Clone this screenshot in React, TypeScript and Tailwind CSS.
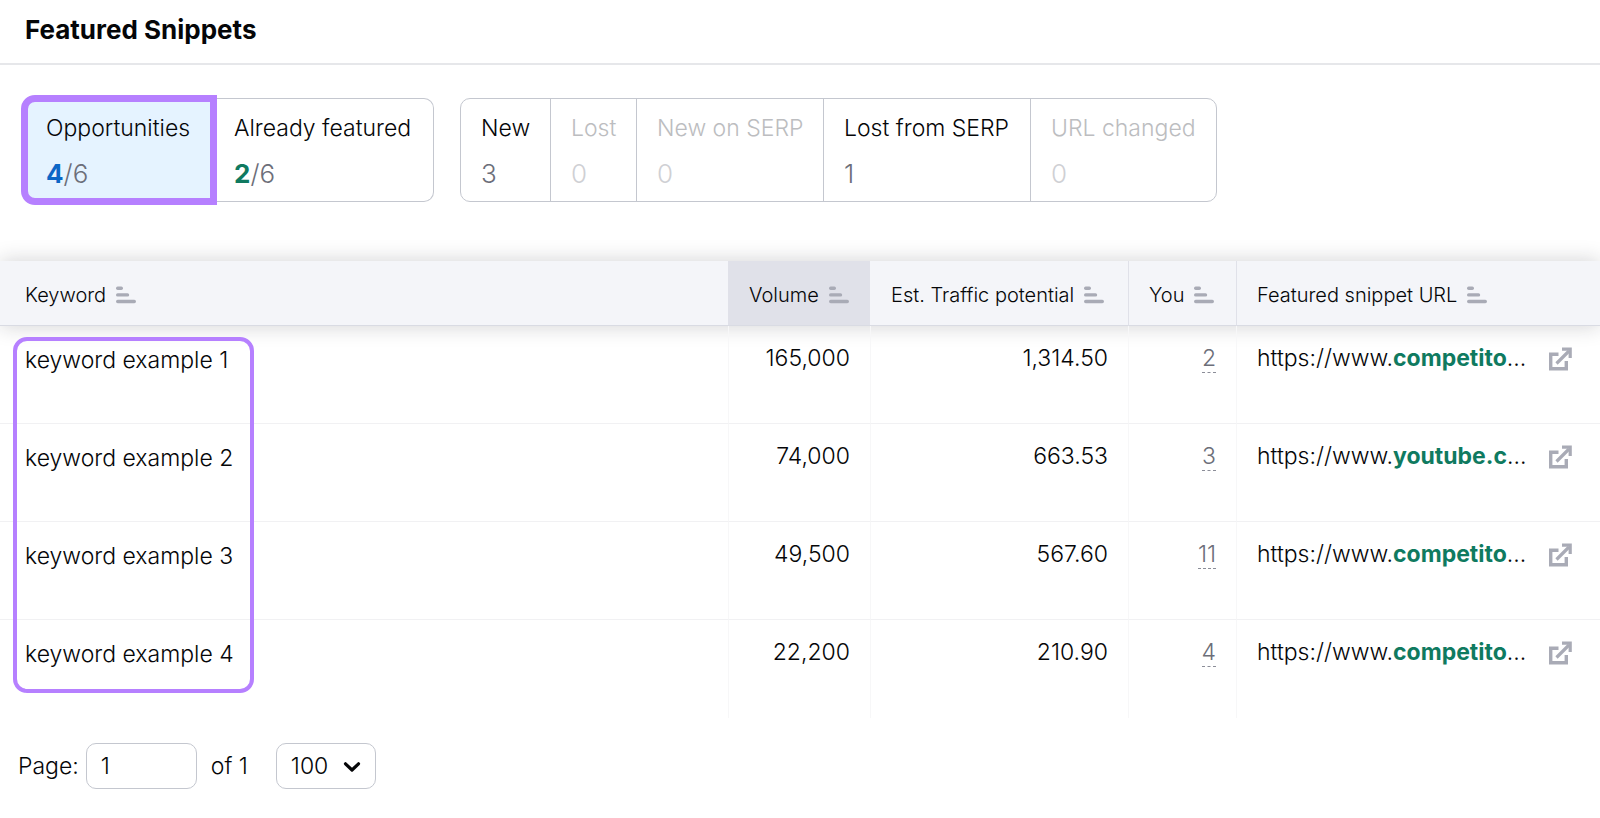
type Filter = {
  label: string;
  value: number;
  width: string;
};

type Row = {
  keyword: string;
  volume: string;
  traffic: string;
  position: number;
  domain: string;
};

const changeFilters: Filter[] = [
  { label: "New", value: 3, width: "w-[89px]" },
  { label: "Lost", value: 0, width: "w-[86px]" },
  { label: "New on SERP", value: 0, width: "w-[187px]" },
  { label: "Lost from SERP", value: 1, width: "w-[207px]" },
  { label: "URL changed", value: 0, width: "w-[186px]" },
];

const columns = [
  { label: "Keyword", className: "pl-[25px]" },
  { label: "Volume", className: "bg-[#e0e1e9] pl-[21px]" },
  { label: "Est. Traffic potential", className: "pl-[21px]" },
  { label: "You", className: "border-l border-[#e0e1e9] pl-5" },
  { label: "Featured snippet URL", className: "border-l border-[#e0e1e9] pl-5" },
];

const rows: Row[] = [
  { keyword: "keyword example 1", volume: "165,000", traffic: "1,314.50", position: 2, domain: "competito" },
  { keyword: "keyword example 2", volume: "74,000", traffic: "663.53", position: 3, domain: "youtube.c" },
  { keyword: "keyword example 3", volume: "49,500", traffic: "567.60", position: 11, domain: "competito" },
  { keyword: "keyword example 4", volume: "22,200", traffic: "210.90", position: 4, domain: "competito" },
];

function SortIcon() {
  return (
    <svg width="20" height="18" viewBox="0 0 20 18" fill="#a9abb6" aria-hidden="true">
      <rect x="0" y="0.5" width="7" height="3.4" rx="1.7" />
      <rect x="0" y="7.2" width="13.2" height="3.4" rx="1.7" />
      <rect x="0" y="13.8" width="20" height="3.4" rx="1.7" />
    </svg>
  );
}

function ExternalIcon() {
  return (
    <svg width="24" height="25" viewBox="0 0 24 25" fill="none" stroke="#a9abb6" aria-hidden="true">
      <path d="M10.5 8.2H2.7V22.8H18.3V15" strokeWidth="3.4" />
      <path d="M8.5 17.5L21 5" strokeWidth="3.2" />
      <path d="M14 3.2H22.2V12" strokeWidth="3.2" />
    </svg>
  );
}

function ChangeFilter({ label, value, width }: Filter) {
  const disabled = value === 0;

  return (
    <button
      type="button"
      disabled={disabled}
      className={`${width} flex flex-col gap-4 pt-[15px] pl-5 text-left not-first:border-l not-first:border-[#c4c7cf]`}
    >
      <span className={`text-[23px] leading-7 ${disabled ? "text-[#bcbdc0]" : "text-[#050608]"}`}>{label}</span>
      <span className={`text-[26px] leading-8 ${disabled ? "text-[#cfd0d4]" : "text-[#6c6e79]"}`}>{value}</span>
    </button>
  );
}

export default function App() {
  return (
    <main className="min-h-screen bg-white font-['Inter',sans-serif] font-light text-[#050608]">
      <header className="border-b-2 border-[#e6e7ea] px-[25px] pt-3 pb-4">
        <h1 className="text-[26px] leading-[35px] font-bold">Featured Snippets</h1>
      </header>

      <section className="flex items-center pt-[30px] pl-[21px] whitespace-nowrap">
        <button
          type="button"
          className="flex h-[110px] w-[196px] flex-col gap-4 rounded-l-[14px] border-[7px] border-[#b680ff] bg-[#e5f3ff] pt-3 pl-[18px] text-left"
        >
          <span className="text-[23px] leading-7">Opportunities</span>
          <span className="text-[26px] leading-8 text-[#6c6e79]">
            <b className="font-bold text-[#0b66c6]">4</b>/6
          </span>
        </button>
        <button
          type="button"
          className="flex h-26 w-[217px] flex-col gap-4 rounded-r-[10px] border border-l-0 border-[#c4c7cf] pt-[15px] pl-[17px] text-left"
        >
          <span className="text-[23px] leading-7">Already featured</span>
          <span className="text-[26px] leading-8 text-[#6c6e79]">
            <b className="font-bold text-[#0f7a60]">2</b>/6
          </span>
        </button>

        <div className="ml-[26px] flex h-26 rounded-[10px] border border-[#c4c7cf]">
          {changeFilters.map((filter) => (
            <ChangeFilter key={filter.label} {...filter} />
          ))}
        </div>
      </section>

      <section className="relative mt-14">
        <table className="w-full table-fixed border-separate border-spacing-0">
          <colgroup>
            <col />
            <col className="w-[142px]" />
            <col className="w-[258px]" />
            <col className="w-[108px]" />
            <col className="w-[364px]" />
          </colgroup>
          <thead className="bg-[#f4f5f9] shadow-[0_0_20px_rgba(25,27,35,0.2)]">
            <tr>
              {columns.map((column) => (
                <th
                  key={column.label}
                  className={`h-[65px] border-b border-b-[#d9dbe3] pt-[3px] text-left text-xl font-light whitespace-nowrap ${column.className}`}
                >
                  <span className="flex items-center gap-2.5">
                    {column.label}
                    <SortIcon />
                  </span>
                </th>
              ))}
            </tr>
          </thead>
          <tbody className="text-[23px] leading-7">
            {rows.map((row) => (
              <tr
                key={row.keyword}
                className="[&>td]:h-[98px] [&>td]:border-b [&>td]:border-[#f7f7f8] [&>td]:border-b-[#f1f1f3] [&>td]:align-top last:[&>td]:border-b-0"
              >
                <td className="pt-5 pl-[25px]">{row.keyword}</td>
                <td className="border-l pt-[18px] pr-5 text-right">{row.volume}</td>
                <td className="border-l pt-[18px] pr-5 text-right">{row.traffic}</td>
                <td className="border-l pt-[18px] pr-5 text-right text-[#6c6e79]">
                  <span className="inline-block border-b border-dashed border-[#8b8d98]">{row.position}</span>
                </td>
                <td className="border-l pt-[18px] pl-5">
                  <div className="flex items-center justify-between pr-7">
                    <span>
                      https://www.<b className="font-bold text-[#0f7a60]">{row.domain}</b>...
                    </span>
                    <a href="#" aria-label="Open snippet URL">
                      <ExternalIcon />
                    </a>
                  </div>
                </td>
              </tr>
            ))}
          </tbody>
        </table>
        <div className="pointer-events-none absolute top-[76px] bottom-[25px] left-[13px] w-[241px] rounded-[14px] border-4 border-[#b680ff]" />
      </section>

      <footer className="flex items-center pt-[25px] pb-7 pl-[18px] text-[23px]">
        <label htmlFor="page">Page:</label>
        <input
          id="page"
          type="text"
          defaultValue="1"
          className="ml-[7px] h-[46px] w-[111px] rounded-[10px] border border-[#c4c7cf] px-3.5"
        />
        <span className="ml-3.5">of 1</span>
        <div className="relative ml-7">
          <select
            aria-label="Rows per page"
            defaultValue="100"
            className="h-[46px] w-[100px] appearance-none rounded-[10px] border border-[#c4c7cf] bg-white pl-3.5"
          >
            <option value="10">10</option>
            <option value="50">50</option>
            <option value="100">100</option>
          </select>
          <svg
            className="pointer-events-none absolute top-[18px] right-[15px]"
            width="18"
            height="12"
            viewBox="0 0 18 12"
            fill="none"
            stroke="#050608"
            strokeWidth="3.2"
            strokeLinecap="round"
            strokeLinejoin="round"
            aria-hidden="true"
          >
            <path d="M2.5 2.8L9 9L15.5 2.8" />
          </svg>
        </div>
      </footer>
    </main>
  );
}
